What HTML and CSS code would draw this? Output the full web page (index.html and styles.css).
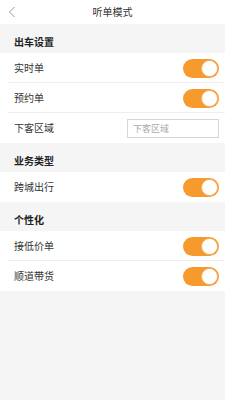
FILE: index.html
```html
<!DOCTYPE html>
<html>
<head>
<meta charset="utf-8">
<link rel="stylesheet" href="styles.css">
</head>
<body>
<div class="header">
  <svg class="back" width="8" height="12" viewBox="0 0 8 12"><path d="M6.5 1 L1.5 6 L6.5 11" fill="none" stroke="#999" stroke-width="1"/></svg>
  <span class="title">听单模式</span>
</div>
<div class="section">出车设置</div>
<div class="row"><span class="label">实时单</span><span class="toggle"><span class="knob"></span></span></div>
<div class="row"><span class="label">预约单</span><span class="toggle"><span class="knob"></span></span></div>
<div class="row last"><span class="label">下客区域</span><span class="input">下客区域</span></div>
<div class="section">业务类型</div>
<div class="row last"><span class="label">跨城出行</span><span class="toggle"><span class="knob"></span></span></div>
<div class="section">个性化</div>
<div class="row"><span class="label">接低价单</span><span class="toggle"><span class="knob"></span></span></div>
<div class="row last"><span class="label">顺道带货</span><span class="toggle"><span class="knob"></span></span></div>
</body>
</html>
```
FILE: styles.css
```css
html, body { margin: 0; padding: 0; background: #f5f5f5; height: 100%; }
body { font-family: "Noto Sans CJK SC", "Noto Sans", sans-serif; color: #333; }
.header { height: 24px; background: #fff; position: relative; display: flex; align-items: center; justify-content: center; }
.back { position: absolute; left: 8px; top: 6px; }
.title { font-size: 10px; color: #333; line-height: 1; }
.section { height: 29px; box-sizing: border-box; padding: 11px 0 0 14px; font-size: 10px; font-weight: bold; color: #222; line-height: 14px; background: #f5f5f5; }
.row { height: 30px; box-sizing: border-box; background: #fff linear-gradient(#eee, #eee) no-repeat 8px 100% / calc(100% - 8px) 1px; display: flex; align-items: center; justify-content: space-between; padding: 0 6px 0 14px; }
.row.last { background: #fff; }
.label { font-size: 10px; color: #333; line-height: 1; }
.toggle { width: 36px; height: 19px; border-radius: 10px; background: #f79a2e; position: relative; }
.knob { position: absolute; right: 1px; top: 1px; width: 15px; height: 15px; border-radius: 50%; background: #fff; border: 1px solid #f3b15e; }
.input { width: 92px; height: 19px; box-sizing: border-box; border: 1px solid #d6d6d6; font-size: 9px; color: #aaa; padding-left: 5px; line-height: 17px; }
```
